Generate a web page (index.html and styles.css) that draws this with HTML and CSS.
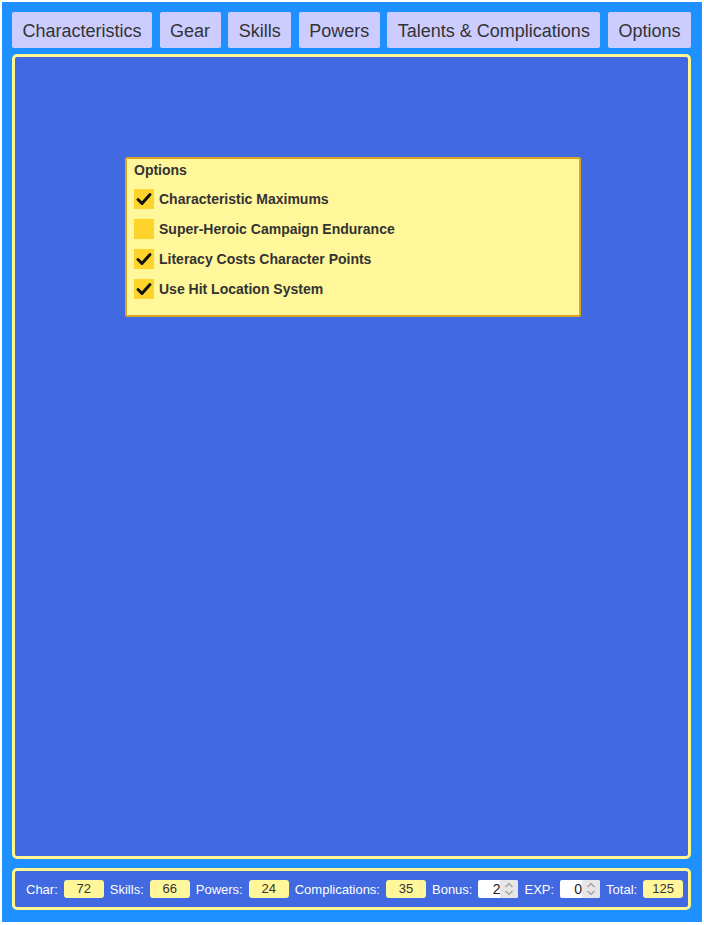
FILE: index.html
```html
<!DOCTYPE html>
<html>
<head>
<meta charset="utf-8">
<link rel="stylesheet" href="styles.css">
</head>
<body>
<div class="app">
  <nav class="tabs">
    <div class="tab">Characteristics</div>
    <div class="tab">Gear</div>
    <div class="tab">Skills</div>
    <div class="tab">Powers</div>
    <div class="tab">Talents &amp; Complications</div>
    <div class="tab">Options</div>
  </nav>
  <main class="panel">
    <section class="options">
      <div class="options-title">Options</div>
      <div class="opt">
        <span class="box"><svg viewBox="0 0 20 20" width="20" height="20"><path d="M4 10.5 L8 14.5 L16 5.5" fill="none" stroke="#111" stroke-width="3" stroke-linecap="round" stroke-linejoin="round"/></svg></span>
        <span>Characteristic Maximums</span>
      </div>
      <div class="opt">
        <span class="box"></span>
        <span>Super-Heroic Campaign Endurance</span>
      </div>
      <div class="opt">
        <span class="box"><svg viewBox="0 0 20 20" width="20" height="20"><path d="M4 10.5 L8 14.5 L16 5.5" fill="none" stroke="#111" stroke-width="3" stroke-linecap="round" stroke-linejoin="round"/></svg></span>
        <span>Literacy Costs Character Points</span>
      </div>
      <div class="opt">
        <span class="box"><svg viewBox="0 0 20 20" width="20" height="20"><path d="M4 10.5 L8 14.5 L16 5.5" fill="none" stroke="#111" stroke-width="3" stroke-linecap="round" stroke-linejoin="round"/></svg></span>
        <span>Use Hit Location System</span>
      </div>
    </section>
  </main>
  <footer class="totals">
    <span class="lbl">Char:</span><span class="val">72</span>
    <span class="lbl">Skills:</span><span class="val">66</span>
    <span class="lbl">Powers:</span><span class="val">24</span>
    <span class="lbl">Complications:</span><span class="val">35</span>
    <span class="lbl">Bonus:</span>
    <span class="num"><span class="num-v">2</span><span class="spin"><svg viewBox="0 0 18 18" width="18" height="18"><path d="M5.5 7 L9 3.5 L12.5 7 M5.5 11 L9 14.5 L12.5 11" fill="none" stroke="#9a9a9a" stroke-width="1.2"/></svg></span></span>
    <span class="lbl">EXP:</span>
    <span class="num"><span class="num-v">0</span><span class="spin"><svg viewBox="0 0 18 18" width="18" height="18"><path d="M5.5 7 L9 3.5 L12.5 7 M5.5 11 L9 14.5 L12.5 11" fill="none" stroke="#9a9a9a" stroke-width="1.2"/></svg></span></span>
    <span class="lbl">Total:</span><span class="val">125</span>
  </footer>
</div>
</body>
</html>
```

FILE: styles.css
```css
html, body {
  margin: 0;
  padding: 0;
  background: #ffffff;
}
body {
  padding: 2px;
  font-family: "Liberation Sans", Arial, Helvetica, sans-serif;
}
.app {
  width: 700px;
  height: 920px;
  box-sizing: border-box;
  background: #1e90ff;
  padding: 10px 11px 12px 10px;
  display: flex;
  flex-direction: column;
}
.tabs {
  display: flex;
  justify-content: space-between;
  height: 36px;
}
.tab {
  background: #ccccff;
  color: #333;
  font-size: 18px;
  border-radius: 2px;
  padding: 3px 10.5px 0 10.5px;
  display: flex;
  align-items: center;
  justify-content: center;
}
.panel {
  margin-top: 6px;
  height: 805px;
  box-sizing: border-box;
  background: #4169e1;
  border: 3px solid #fff68f;
  border-radius: 5px;
  padding-top: 100px;
}
.options {
  width: 456px;
  margin-left: 110px;
  box-sizing: border-box;
  background: #fff799;
  border: 2px solid #daa520;
  border-radius: 2px;
  padding: 3px 7px 16px 7px;
  color: #333;
}
.options-title {
  font-size: 14px;
  font-weight: bold;
  height: 17px;
  line-height: 17px;
  margin-bottom: 10px;
}
.opt {
  display: flex;
  align-items: center;
  gap: 5px;
  font-size: 14px;
  font-weight: bold;
  height: 20px;
  margin-bottom: 10px;
}
.opt:last-child { margin-bottom: 0; }
.box {
  width: 20px;
  height: 20px;
  background: #ffd42a;
  display: block;
  flex: none;
}
.box svg { display: block; }
.totals {
  margin-top: 9px;
  height: 42px;
  box-sizing: border-box;
  border: 3px solid #fff68f;
  border-radius: 5px;
  background: #4169e1;
  display: flex;
  align-items: center;
  padding: 0 0 0 11px;
  gap: 6px;
  color: #ffffff;
  font-size: 13px;
}
.val {
  width: 40px;
  height: 18px;
  line-height: 18px;
  background: #fff799;
  color: #333;
  text-align: center;
  border-radius: 3px;
}
.num {
  width: 40px;
  height: 18px;
  display: flex;
  background: #ffffff;
  border-radius: 2px;
  overflow: hidden;
  color: #222;
}
.num-v {
  flex: 1;
  text-align: right;
  line-height: 18px;
  font-size: 14px;
}
.spin {
  width: 18px;
  height: 18px;
  background: #e6e6e6;
}
.spin svg { display: block; }
```
